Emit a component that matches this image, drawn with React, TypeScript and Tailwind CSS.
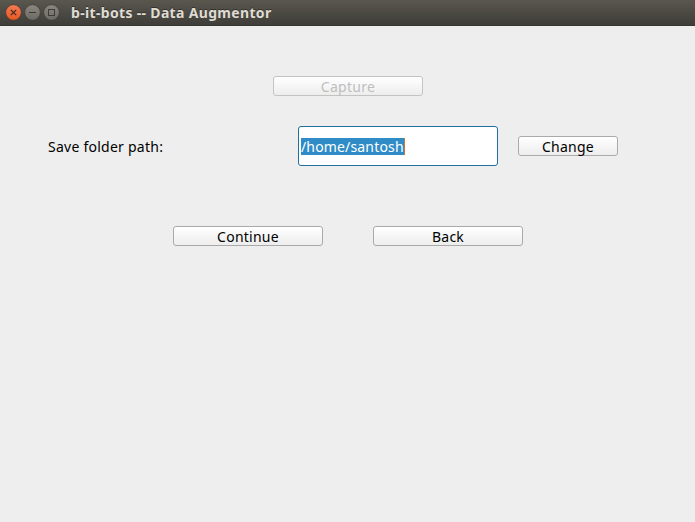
import type { ReactNode } from 'react';

type ButtonProps = { children: ReactNode; width: string; spacing: string; disabled?: boolean };

function PushButton({ children, width, spacing, disabled = false }: ButtonProps) {
  return (
    <button
      disabled={disabled}
      className={`flex h-5 shrink-0 items-center justify-center rounded-[3px] border bg-linear-to-b from-white to-[#ededed] whitespace-nowrap ${width} ${
        disabled ? 'border-[#c3c3c3] text-[#bebebe]' : 'border-[#aaaaaa] text-black'
      }`}
    >
      <span className={`relative top-px ${spacing}`}>{children}</span>
    </button>
  );
}

function WindowControls() {
  return (
    <svg width="58" height="26" viewBox="0 0 58 26" fill="none" className="ml-1 shrink-0">
      <defs>
        <linearGradient id="close" x1="0" y1="0" x2="0" y2="1">
          <stop stopColor="#f37c55" />
          <stop offset="1" stopColor="#e9561f" />
        </linearGradient>
        <linearGradient id="control" x1="0" y1="0" x2="0" y2="1">
          <stop stopColor="#8a8881" />
          <stop offset="1" stopColor="#6b6963" />
        </linearGradient>
      </defs>
      <circle cx="9.5" cy="12.5" r="7.8" fill="url(#close)" stroke="#37352f" strokeWidth="0.6" />
      <path d="M6.8 9.8l5.4 5.4M12.2 9.8l-5.4 5.4" stroke="#3b2a20" strokeWidth="1.2" />
      <circle cx="28.5" cy="12.5" r="7.8" fill="url(#control)" stroke="#37352f" strokeWidth="0.6" />
      <path d="M25 12.5h7" stroke="#3c3b37" />
      <circle cx="47.5" cy="12.5" r="7.8" fill="url(#control)" stroke="#37352f" strokeWidth="0.6" />
      <rect x="44.5" y="9.5" width="6" height="6" stroke="#3c3b37" />
    </svg>
  );
}

export default function App() {
  return (
    <div className="flex h-[522px] w-[695px] flex-col overflow-hidden bg-[#eeeeee] font-['Noto_Sans',sans-serif] text-[14px] leading-5 text-black">
      <header className="flex h-[26px] shrink-0 items-center border-b border-[#363530] bg-linear-to-b from-[#5a574e] to-[#3e3d39]">
        <WindowControls />
        <h1 className="ml-[9px] text-[14px] font-bold whitespace-nowrap text-[#dfdbd2] text-shadow-[0_-1px_0_#33322e]">
          <span className="tracking-[0.33px]">b-it-bots -- Data Augmentor</span>
        </h1>
      </header>
      <main className="flex flex-col pt-[50px]">
        <div className="flex pl-[273px]">
          <PushButton width="w-[150px]" spacing="tracking-[0.3px]" disabled>Capture</PushButton>
        </div>
        <div className="mt-[30px] flex h-10 items-center pl-12">
          <label className="w-[250px] shrink-0 pt-0.5"><span className="tracking-[0.25px]">Save folder path:</span></label>
          <div className="flex h-10 w-[200px] shrink-0 items-center rounded-[3px] border border-[#20709f] bg-white pl-[2px]">
            <span className="flex h-[17px] w-[103px] items-center bg-[#308cc6] pt-0.5 text-white">
              <span className="tracking-[0.16px]">/home/santosh</span>
            </span>
            <span className="h-[17px] w-px bg-[#cf7339]" />
          </div>
          <div className="ml-5">
            <PushButton width="w-[100px]" spacing="tracking-[0.25px]">Change</PushButton>
          </div>
        </div>
        <div className="mt-[60px] flex gap-[50px] pl-[173px]">
          <PushButton width="w-[150px]" spacing="tracking-[0.25px]">Continue</PushButton>
          <PushButton width="w-[150px]" spacing="tracking-[0.25px]">Back</PushButton>
        </div>
      </main>
    </div>
  );
}
